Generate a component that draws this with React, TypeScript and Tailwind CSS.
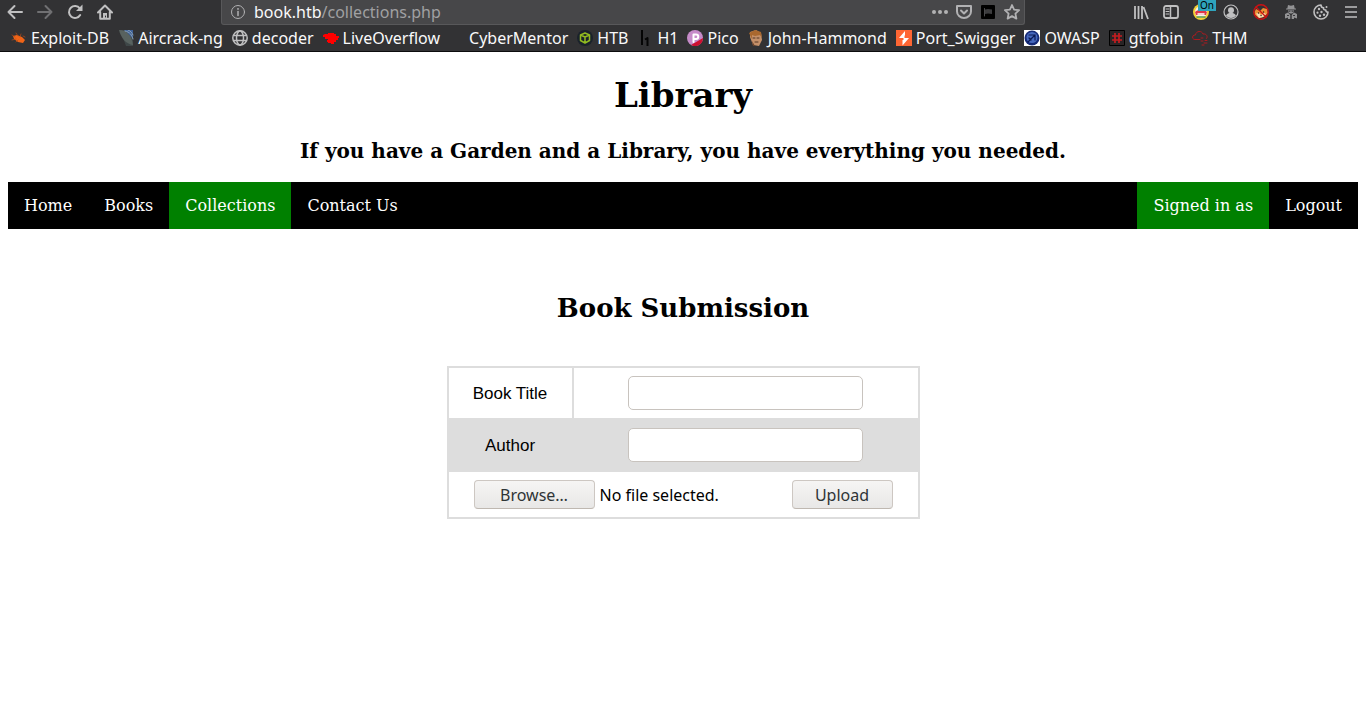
import type { ReactNode } from 'react';

const uiFont = "font-['Noto_Sans',sans-serif]";
const serifFont = "font-['DejaVu_Serif',serif]";

function Glyph({ children }: { children: ReactNode }) {
  return (
    <svg viewBox="0 0 16 16" className="size-4 shrink-0" fill="none" stroke="currentColor" strokeWidth="2" strokeLinecap="round" strokeLinejoin="round" aria-hidden="true">
      {children}
    </svg>
  );
}

function ToolButton({ label, dim, children }: { label: string; dim?: boolean; children: ReactNode }) {
  return (
    <button type="button" aria-label={label} className={`relative flex h-6 w-[30px] shrink-0 items-center justify-center ${dim ? 'text-[#707072]' : 'text-[#c0c0c1]'}`}>
      <Glyph>{children}</Glyph>
    </button>
  );
}

function Toolbar() {
  return (
    <div className="flex items-start">
      <ToolButton label="Back"><path d="M15 8H1.500M7.500 2 1.500 8l6 6" /></ToolButton>
      <ToolButton label="Forward" dim><path d="M1 8h13.500M8.500 2l6 6-6 6" /></ToolButton>
      <ToolButton label="Reload">
        <path d="M13.200 11a6 6 0 1 1-.4-6.600" />
        <path d="M15.500 .5v6.500H9z" fill="currentColor" stroke="none" />
      </ToolButton>
      <ToolButton label="Home">
        <path d="M1 8.500 8 1.500l7 7M3.200 8v6.800h9.600V8" />
        <path d="M6 9h4v5H6z" fill="currentColor" stroke="none" />
        <path d="M8.500 12v1" stroke="#323234" strokeWidth="1" />
      </ToolButton>
      <div className="mx-[101px] flex h-[25px] min-w-0 flex-1 items-center rounded-b-[3px] border border-t-0 border-[#58585a] bg-[#474749] pr-1 pl-2 text-[#b1b1b3]">
        <Glyph>
          <circle cx="8" cy="8" r="6.500" strokeWidth="1" />
          <path d="M8 7.500v4" strokeWidth="1.500" />
          <path d="M8 4.800v.1" strokeWidth="1.800" />
        </Glyph>
        <a href="#address" className="ml-2 flex-1 truncate text-base leading-6 text-[#a0a0a2]">
          <span className="text-[#f9f9fa]">book.htb</span>/collections.php
        </a>
        <div className="flex items-center gap-2">
          <button type="button" aria-label="Page actions">
            <Glyph><g fill="currentColor" stroke="none"><circle cx="2" cy="8" r="2" /><circle cx="8" cy="8" r="2" /><circle cx="14" cy="8" r="2" /></g></Glyph>
          </button>
          <button type="button" aria-label="Save to Pocket">
            <Glyph><path d="M1 2h14v5.500a7 6.500 0 0 1-14 0zM5 6.500l3 3 3-3" /></Glyph>
          </button>
          <button type="button" aria-label="Extension">
            <Glyph>
              <rect x="1" y="1" width="14" height="14" rx="1" fill="#000" stroke="none" />
              <path d="M4.500 4.500v7.500" stroke="#4a4a4c" strokeWidth="1" />
              <path d="M5 5.500l3-.5 4 .5V10l-4-.5-3 .5z" fill="#3c3c3e" stroke="none" />
            </Glyph>
          </button>
          <button type="button" aria-label="Bookmark this page">
            <Glyph><path d="m8 1 2.100 4.600 5 .6-3.700 3.400 1 5L8 12.100l-4.400 2.500 1-5L.9 6.200l5-.6z" strokeWidth="1.800" /></Glyph>
          </button>
        </div>
      </div>
      <ToolButton label="Library">
        <path d="M2 2v13M5.500 2v13M9 2v13M10.500 3l4.500 12" strokeWidth="1.800" strokeLinecap="butt" />
      </ToolButton>
      <ToolButton label="Sidebars">
        <rect x="1" y="2" width="14" height="12" rx="2" strokeWidth="1.800" />
        <path d="M7.500 2v12" strokeWidth="1.500" />
        <path d="M3 5h3M3 7.500h3M3 10h3" strokeWidth="1" />
      </ToolButton>
      <button type="button" aria-label="Proxy" className="relative flex h-6 w-[30px] shrink-0 items-center justify-center">
        <Glyph>
          <circle cx="8" cy="8" r="8" fill="#f5cf35" stroke="none" />
          <circle cx="8" cy="8" r="6" fill="#f8eee8" stroke="none" />
          <path d="M2 8c3-3 9-3 12 0l-1 3H3z" fill="#df3848" stroke="none" />
          <path d="M5 10h6" stroke="#fff" strokeWidth="1.500" />
          <path d="M4 13h8" stroke="#559942" strokeWidth="1.500" />
        </Glyph>
        <span className="absolute -top-px right-0 h-3 w-[18px] bg-[#2fa4bd] text-center text-[10px] leading-3 text-black">On</span>
      </button>
      <ToolButton label="Account">
        <circle cx="8" cy="8" r="7" strokeWidth="1.200" />
        <circle cx="8" cy="6.300" r="3" fill="currentColor" stroke="none" />
        <path d="M3 11.500c1.300-2.200 2.500-2.500 5-2.500s3.700.3 5 2.500C11.700 13.200 10 14 8 14s-3.700-.8-5-2.500z" fill="currentColor" stroke="none" />
      </ToolButton>
      <ToolButton label="Fox extension">
        <path d="M1.500 8 3 5l4 2 3-3 4 1 1 4-4 4-5 1-4-3z" fill="#ec8f35" stroke="none" />
        <path d="m3 9.500 3-.5 2 2 3-2 2 1-3 3-4 1z" fill="#f5dcb4" stroke="none" />
        <path d="M5.500 9h.1M10.500 8h.1M8 11.500h.1" stroke="#31271c" strokeWidth="1.300" />
        <circle cx="8" cy="8" r="7.200" stroke="#cc1113" strokeWidth="1.400" />
        <path d="m3 3 10 10" stroke="#cc1113" strokeWidth="1.300" />
      </ToolButton>
      <ToolButton label="User agent">
        <g fill="#929294" stroke="none">
          <path d="M5 1l3 .7L11 1l.7 3.500H13v1H3v-1h1.300z" />
          <path d="M5 6.200h6L10.500 8.500 9 9.500H7L5.500 8.500z" />
          <path d="m2 10 3-1.500L7.300 11v4H5v-1.500L2 14.500zM14 10l-3-1.500L8.700 11v4H11v-1.500l3 1z" />
        </g>
        <path d="M6 7.200h1M9 7.200h1M4.500 11.500h1M10.500 11.500h1" stroke="#323234" strokeWidth="1" />
      </ToolButton>
      <ToolButton label="Cookies">
        <path d="M8 1a7 7 0 1 0 7 7c-1.500.2-2.200-.6-2.200-2-1.600.2-2.600-.8-2.200-2.300C9 3.700 8 2.700 8 1z" strokeWidth="1.600" />
        <g fill="currentColor" stroke="none"><circle cx="6" cy="5" r="1.200" /><circle cx="4.500" cy="8.700" r="1.100" /><circle cx="8.500" cy="8" r="1.200" /><circle cx="7" cy="11.800" r="1.200" /><circle cx="11" cy="10.800" r="1.200" /><circle cx="13.500" cy="3" r="1" /></g>
      </ToolButton>
      <ToolButton label="Menu"><path d="M2 3h12M2 8h12M2 13h12" strokeWidth="1.700" strokeLinecap="butt" /></ToolButton>
    </div>
  );
}

const bookmarks: { name: string; icon: ReactNode }[] = [
  {
    name: 'Exploit-DB',
    icon: <g stroke="none" fill="#f06417"><path d="m2 6 4-1 5 2 3 3-2 3-5-1-4-3z" /><path d="m5 3 2 3M1 5l3 2M1 10l4-1M5 12l2-2M10 4l-1 3M12 6l2 1" stroke="#b84c18" strokeWidth=".7" /></g>,
  },
  {
    name: 'Aircrack-ng',
    icon: <g stroke="none"><path d="M2 0h13v16H8z" fill="#3f4748" /><path d="M6 0h9v9z" fill="#3e6097" /><path d="M1 0c8 0 13 6 14 15C8 14 3 8 1 0z" fill="#58625f" /><path d="M7 1c5 1 7 4 8 8M10 0c3 1 4 3 5 5" stroke="#8ba1b4" strokeWidth="1" fill="none" /></g>,
  },
  {
    name: 'decoder',
    icon: <g stroke="#c0c0c1" strokeWidth="1.500"><circle cx="8" cy="8" r="7.200" /><ellipse cx="8" cy="8" rx="3.500" ry="7" /><path d="M2 5.500h12M2 10.500h12" /></g>,
  },
  {
    name: 'LiveOverflow',
    icon: <path d="M0 5l2-1h3V3h6v1h2v2h3v2h-1v2h-2v2h-2v2H8v-1H5v-1H4v-2h1V9H2V7H0z" fill="#f00" stroke="none" />,
  },
  { name: 'CyberMentor', icon: null },
  {
    name: 'HTB',
    icon: <g><circle cx="8" cy="8" r="8" fill="#1a222b" stroke="none" /><path d="m8 3 4.500 2v5.500L8 13l-4.500-2.500V5zM3.500 5 8 7l4.500-2M8 7v6" stroke="#91ba20" strokeWidth="1.500" /></g>,
  },
  {
    name: 'H1',
    icon: <path d="M5 0v15M8 9.500l2.500-1.500v8" stroke="#050505" strokeWidth="2" strokeLinecap="butt" />,
  },
  {
    name: 'Pico',
    icon: <g stroke="none"><circle cx="8" cy="8" r="8" fill="#c68bc9" /><path d="M16 8A8 8 0 0 1 4 15z" fill="#cd1131" /><path d="M6.500 12V4.500H9a2.200 2.200 0 0 1 0 4.500H7" fill="none" stroke="#fff" strokeWidth="2" /></g>,
  },
  {
    name: 'John-Hammond',
    icon: <g stroke="none"><path d="M2 2 8 0l5 3 1 7-3 6-6-1-3-8z" fill="#c49069" /><path d="M1 3 7 0l6 2 1 6-2-3-5 1-3-1v4z" fill="#a9682f" /><path d="M5 8h2M9 8h2M7 12h3" stroke="#543626" strokeWidth="1" /><path d="m4 11 3 5H5z" fill="#6c432b" /></g>,
  },
  {
    name: 'Port_Swigger',
    icon: <g stroke="none"><path d="M0 0h16v16H0z" fill="#ff6633" /><path d="M9 1 3 8h4.500v2H6.500v5.500L13 8H8.500V5.500H9z" fill="#fff" /></g>,
  },
  {
    name: 'OWASP',
    icon: <g stroke="none"><path d="M0 0h16v16H0z" fill="#fff" /><circle cx="8" cy="8" r="7.500" fill="#152a78" /><circle cx="8" cy="7.500" r="5.500" fill="#4668bd" /><path d="m4 12 7-7M5 5h6v5M5 8l2 2" stroke="#0a1a55" strokeWidth="1.200" fill="none" /></g>,
  },
  {
    name: 'gtfobin',
    icon: <g strokeLinecap="butt"><path d="M.5.5h15v15H.5z" fill="#292425" stroke="#000" strokeWidth="1" /><path d="M6 3v10M10 3v10M3 6h10M3 10h10" stroke="#c51d20" strokeWidth="1.700" /></g>,
  },
  {
    name: 'THM',
    icon: <g stroke="#ad1b20" strokeWidth="1"><path d="M8 9.500H3c-3.500 0-3-5 .5-4.500C4 .500 10 .500 11 4c4-.5 5 3 3.500 4.500" /><path d="M9 8h2M13 10.500h2M9 11h2M12 13h3M10 15h2" /></g>,
  },
];

function Bookmarks() {
  return (
    <nav aria-label="Bookmarks" className="flex items-center gap-[9px] overflow-hidden pl-[11px] text-base leading-[26px] whitespace-nowrap text-[#f9f9fa]">
      {bookmarks.map((b) => (
        <a key={b.name} href="#bookmark" className="flex shrink-0 items-center gap-1">
          <Glyph>{b.icon}</Glyph>
          <span>{b.name}</span>
        </a>
      ))}
    </nav>
  );
}

function NavLink({ label, active }: { label: string; active?: boolean }) {
  return (
    <a href="#page" className={`px-4 py-[14px] text-base leading-[19px] text-white ${active ? 'bg-[#008000]' : ''}`}>
      {label}
    </a>
  );
}

const cell = 'border-2 border-[#dddddd] px-[25px] py-2';
const labelCell = 'border-2 border-[#dddddd] px-6 pt-[10px] pb-2 text-center leading-6 whitespace-nowrap';
const field = 'mx-auto block h-[34px] w-[235px] rounded-[5px] border border-[#c8c3be] bg-white px-2 outline-none';
const button = 'flex h-[29px] items-center justify-center rounded-[4px] border border-[#cdc7c2] border-b-[#bfb8b1] bg-linear-to-b from-[#f6f5f4] to-[#e8e7e6] text-base text-[#2e3436]';

export default function App() {
  return (
    <div className="min-h-screen bg-white text-black">
      <header className={`border-b border-[#0c0c0d] bg-[#323234] ${uiFont}`}>
        <Toolbar />
        <Bookmarks />
      </header>
      <main className={`px-2 ${serifFont}`}>
        <h1 className="pt-[22px] text-center text-[34px] leading-[42px] font-bold">Library</h1>
        <p className="pt-[23px] text-center text-[20px] leading-6 font-bold">If you have a Garden and a Library, you have everything you needed.</p>
        <nav className="mt-[19px] flex bg-black">
          <NavLink label="Home" />
          <NavLink label="Books" />
          <NavLink label="Collections" active />
          <NavLink label="Contact Us" />
          <div className="flex-1" />
          <NavLink label="Signed in as" active />
          <NavLink label="Logout" />
        </nav>
        <h2 className="pt-16 text-center text-[26px] leading-[30px] font-bold">Book Submission</h2>
        <form className="mt-[43px]" onSubmit={(e) => e.preventDefault()}>
          <table className="mx-auto w-[473px] border-collapse font-['Liberation_Sans',sans-serif] text-[17px]">
            <tbody>
              <tr>
                <td className={labelCell}><label htmlFor="title">Book Title</label></td>
                <td className={`${cell} w-[346px]`}><input id="title" type="text" className={field} /></td>
              </tr>
              <tr className="bg-[#dddddd]">
                <td className={labelCell}><label htmlFor="author">Author</label></td>
                <td className={cell}><input id="author" type="text" className={field} /></td>
              </tr>
              <tr>
                <td colSpan={2} className={cell}>
                  <div className={`flex items-center justify-between ${uiFont}`}>
                    <label className="flex items-center gap-[5px] text-base">
                      <input type="file" className="sr-only" />
                      <span className={`${button} w-[121px]`}>Browse…</span>
                      <span>No file selected.</span>
                    </label>
                    <button type="submit" className={`${button} w-[101px]`}>Upload</button>
                  </div>
                </td>
              </tr>
            </tbody>
          </table>
        </form>
      </main>
    </div>
  );
}
